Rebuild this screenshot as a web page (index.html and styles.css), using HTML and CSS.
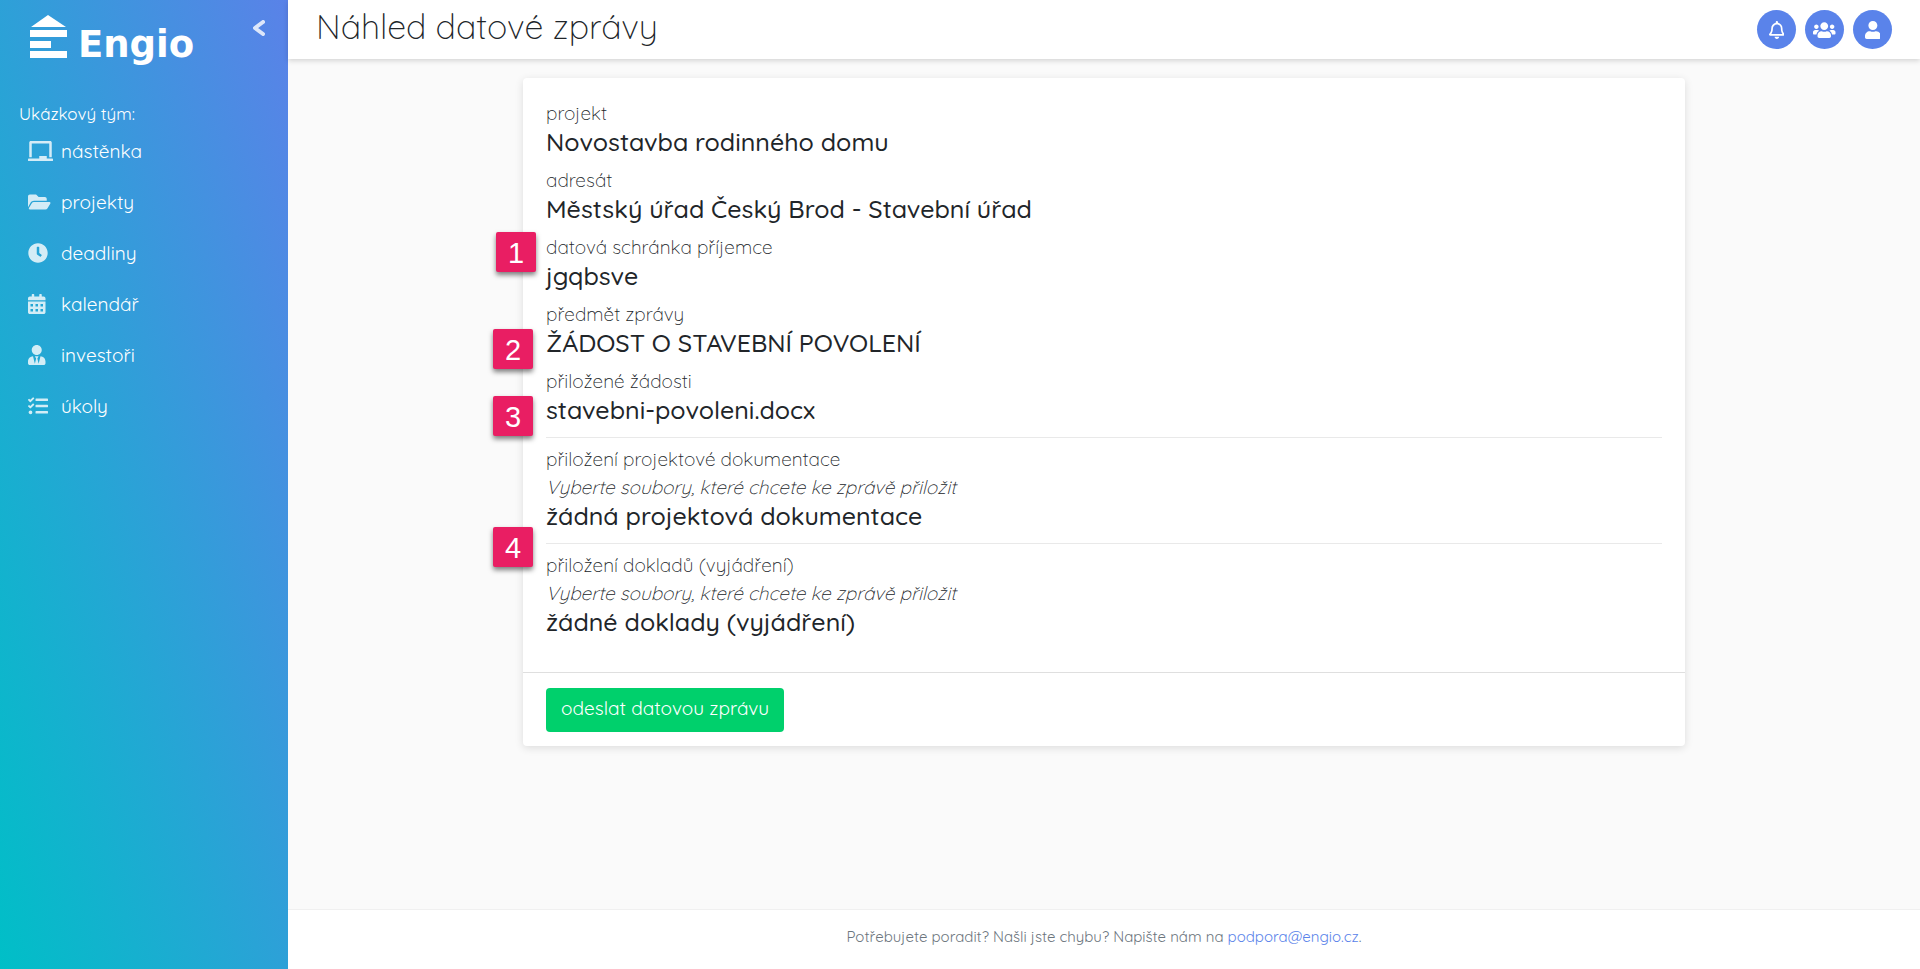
FILE: index.html
```html
<!DOCTYPE html>
<html lang="cs">
<head>
    <meta charset="UTF-8">
    <meta name="viewport" content="width=device-width, initial-scale=1.0">
    <title>Náhled datové zprávy</title>
    <link rel="stylesheet" href="styles.css">
</head>
<body>
    <aside class="sidebar">
        <div class="sidebar-head">
            <a href="#" class="logo">
                <svg class="logo-mark" viewBox="0 0 37 43" aria-hidden="true">
                    <path d="M18 0L36 12H1zM0 15h37v7H0zM0 26h21v7H0zM0 36h37v7H0z"/>
                </svg>
                <span>Engio</span>
            </a>
            <button class="collapse" type="button" aria-label="Skrýt menu">
                <svg viewBox="0 0 14 18" aria-hidden="true"><path d="M11 3L3 9l8 6"/></svg>
            </button>
        </div>
        <p class="team">Ukázkový tým:</p>
        <nav class="menu">
            <a href="#"><svg class="icon" viewBox="0 0 640 512"><path d="M96 64h448v352h64V40c0-22.06-17.94-40-40-40H72C49.94 0 32 17.94 32 40v376h64V64zm528 384H480v-64H288v64H16c-8.84 0-16 7.16-16 16v32c0 8.84 7.16 16 16 16h608c8.84 0 16-7.16 16-16v-32c0-8.84-7.16-16-16-16z"/></svg>nástěnka</a>
            <a href="#"><svg class="icon" viewBox="0 0 576 512"><path d="M572.694 292.093L500.27 416.248A63.997 63.997 0 0 1 444.989 448H45.025c-18.523 0-30.064-20.093-20.731-36.093l72.424-124.155A64 64 0 0 1 152 256h399.964c18.523 0 30.064 20.093 20.73 36.093zM152 224h328v-48c0-26.51-21.49-48-48-48H272l-64-64H48C21.49 64 0 85.49 0 112v278.046l69.077-118.418C86.214 242.25 117.989 224 152 224z"/></svg>projekty</a>
            <a href="#"><svg class="icon" viewBox="0 0 512 512"><path d="M256,8C119,8,8,119,8,256S119,504,256,504,504,393,504,256,393,8,256,8Zm92.49,313h0l-20,25a16,16,0,0,1-22.49,2.5h0l-67-49.72a40,40,0,0,1-15-31.23V112a16,16,0,0,1,16-16h32a16,16,0,0,1,16,16V256l58,42.5A16,16,0,0,1,348.49,321Z"/></svg>deadliny</a>
            <a href="#"><svg class="icon" viewBox="0 0 448 512"><path fill-rule="evenodd" d="M0 192h448v272c0 26.500-21.500 48-48 48H48c-26.500 0-48-21.500-48-48zM64 256h64v64H64zM192 256h64v64h-64zM320 256h64v64h-64zM64 384h64v64H64zM192 384h64v64h-64zM320 384h64v64h-64zM400 64h-48V16c0-8.800-7.200-16-16-16h-32c-8.800 0-16 7.200-16 16v48H160V16c0-8.800-7.200-16-16-16h-32c-8.800 0-16 7.200-16 16v48H48C21.500 64 0 85.500 0 112v48h448v-48c0-26.500-21.500-48-48-48z"/></svg>kalendář</a>
            <a href="#"><svg class="icon" viewBox="0 0 448 512"><path d="M224 256c70.7 0 128-57.3 128-128S294.7 0 224 0 96 57.3 96 128s57.3 128 128 128zm95.8 32.6L272 480l-32-136 32-56h-96l32 56-32 136-47.8-191.4C56.9 292 0 350.3 0 422.4V464c0 26.5 21.5 48 48 48h352c26.5 0 48-21.5 48-48v-41.6c0-72.1-56.9-130.4-128.2-133.8z"/></svg>investoři</a>
            <a href="#"><svg class="icon" viewBox="0 0 512 512"><path d="M139.61 35.5a12 12 0 0 0-17 0L58.93 98.81l-22.7-22.12a12 12 0 0 0-17 0L3.53 92.41a12 12 0 0 0 0 17l47.59 47.4a12.78 12.78 0 0 0 17.61 0l15.59-15.62L156.52 69a12.09 12.09 0 0 0 .09-17zm0 159.19a12 12 0 0 0-17 0l-63.68 63.72-22.7-22.1a12 12 0 0 0-17 0L3.53 252a12 12 0 0 0 0 17L51 316.5a12.77 12.77 0 0 0 17.6 0l15.7-15.69 72.2-72.22a12 12 0 0 0 .09-16.9zM64 368c-26.49 0-48.59 21.5-48.59 48S37.53 464 64 464a48 48 0 0 0 0-96zm432 16H208a16 16 0 0 0-16 16v32a16 16 0 0 0 16 16h288a16 16 0 0 0 16-16v-32a16 16 0 0 0-16-16zm0-320H208a16 16 0 0 0-16 16v32a16 16 0 0 0 16 16h288a16 16 0 0 0 16-16V80a16 16 0 0 0-16-16zm0 160H208a16 16 0 0 0-16 16v32a16 16 0 0 0 16 16h288a16 16 0 0 0 16-16v-32a16 16 0 0 0-16-16z"/></svg>úkoly</a>
        </nav>
    </aside>

    <div class="page">
        <header class="topbar">
            <h1>Náhled datové zprávy</h1>
            <div class="actions">
                <button type="button" aria-label="Upozornění"><svg viewBox="0 0 448 512"><path d="M439.39 362.29c-19.32-20.76-55.47-51.99-55.47-154.29 0-77.7-54.48-139.9-127.94-155.16V32c0-17.67-14.32-32-31.98-32s-31.98 14.33-31.98 32v20.84C118.56 68.1 64.08 130.3 64.08 208c0 102.3-36.15 133.53-55.47 154.29-6 6.45-8.66 14.16-8.61 21.71.11 16.4 12.98 32 32.1 32h383.8c19.12 0 32-15.6 32.1-32 .05-7.55-2.61-15.27-8.61-21.71zM67.53 368c21.22-27.97 44.42-74.33 44.53-159.42 0-.2-.06-.38-.06-.58 0-61.86 50.14-112 112-112s112 50.14 112 112c0 .2-.06.38-.06.58.11 85.1 23.31 131.46 44.53 159.42H67.53zM224 512c35.32 0 63.97-28.65 63.97-64H160.03c0 35.35 28.65 64 63.97 64z"/></svg></button>
                <button type="button" aria-label="Týmy"><svg viewBox="0 0 640 512"><path d="M96 224c35.3 0 64-28.7 64-64s-28.7-64-64-64-64 28.7-64 64 28.7 64 64 64zm448 0c35.3 0 64-28.7 64-64s-28.7-64-64-64-64 28.7-64 64 28.7 64 64 64zm32 32h-64c-17.6 0-33.5 7.1-45.1 18.6 40.3 22.1 68.9 62 75.1 109.4h66c17.7 0 32-14.3 32-32v-32c0-35.3-28.7-64-64-64zm-256 0c61.9 0 112-50.1 112-112S381.9 32 320 32 208 82.1 208 144s50.1 112 112 112zm76.8 32h-8.3c-20.8 10-43.9 16-68.5 16s-47.6-6-68.5-16h-8.3C179.6 288 128 339.6 128 403.2V432c0 26.5 21.5 48 48 48h288c26.5 0 48-21.5 48-48v-28.8c0-63.6-51.6-115.2-115.2-115.2zm-223.7-13.4C161.5 263.1 145.6 256 128 256H64c-35.3 0-64 28.7-64 64v32c0 17.7 14.3 32 32 32h65.9c6.3-47.4 34.9-87.3 75.2-109.4z"/></svg></button>
                <button type="button" aria-label="Uživatel"><svg viewBox="0 0 448 512"><path d="M224 256c70.7 0 128-57.3 128-128S294.7 0 224 0 96 57.3 96 128s57.3 128 128 128zm89.6 32h-16.7c-22.2 10.2-46.9 16-72.9 16s-50.6-5.8-72.9-16h-16.7C60.2 288 0 348.2 0 422.4V464c0 26.5 21.5 48 48 48h352c26.5 0 48-21.5 48-48v-41.6c0-74.2-60.2-134.4-134.4-134.4z"/></svg></button>
            </div>
        </header>

        <main class="content">
            <section class="card">
                <div class="card-body">
                    <div class="field">
                        <div class="label">projekt</div>
                        <div class="value">Novostavba rodinného domu</div>
                    </div>
                    <div class="field">
                        <div class="label">adresát</div>
                        <div class="value">Městský úřad Český Brod - Stavební úřad</div>
                    </div>
                    <div class="field">
                        <span class="marker marker-1">1</span>
                        <div class="label">datová schránka příjemce</div>
                        <div class="value">jgqbsve</div>
                    </div>
                    <div class="field">
                        <span class="marker marker-2">2</span>
                        <div class="label">předmět zprávy</div>
                        <div class="value">ŽÁDOST O STAVEBNÍ POVOLENÍ</div>
                    </div>
                    <div class="field">
                        <span class="marker marker-3">3</span>
                        <div class="label">přiložené žádosti</div>
                        <div class="value">stavebni-povoleni.docx</div>
                    </div>
                    <div class="field divided">
                        <div class="label">přiložení projektové dokumentace</div>
                        <div class="hint">Vyberte soubory, které chcete ke zprávě přiložit</div>
                        <div class="value">žádná projektová dokumentace</div>
                    </div>
                    <div class="field divided">
                        <span class="marker marker-4">4</span>
                        <div class="label">přiložení dokladů (vyjádření)</div>
                        <div class="hint">Vyberte soubory, které chcete ke zprávě přiložit</div>
                        <div class="value">žádné doklady (vyjádření)</div>
                    </div>
                </div>
                <div class="card-footer">
                    <button class="send" type="button">odeslat datovou zprávu</button>
                </div>
            </section>
        </main>

        <footer class="footer">
            Potřebujete poradit? Našli jste chybu? Napište nám na <a href="mailto:podpora@engio.cz">podpora@engio.cz</a>.
        </footer>
    </div>
</body>
</html>
```
FILE: styles.css
```css
* {
    box-sizing: border-box;
}

body, h1, p {
    margin: 0;
}

body {
    display: flex;
    min-height: 100vh;
    font-family: Quicksand, Lato, sans-serif;
    font-size: 19px;
    font-weight: 300;
    line-height: 28px;
    color: #212529;
    background-color: #fafafa;
}

a {
    color: #5a83ea;
    text-decoration: none;
}

button {
    border: none;
    font-family: inherit;
    cursor: pointer;
}

/* Sidebar */
.sidebar {
    flex: 0 0 288px;
    color: #fff;
    background: linear-gradient(to top right, #00bfc7, #5a82e8);
}

.sidebar-head {
    display: flex;
    justify-content: space-between;
    align-items: flex-start;
    padding: 15px 22px 0 30px;
    height: 102px;
}

.logo {
    display: flex;
    gap: 11px;
    color: #fff;
    font-family: "DejaVu Sans", sans-serif;
    font-size: 37px;
    font-weight: 700;
    line-height: 60px;
}

.logo-mark {
    width: 37px;
    height: 43px;
    fill: #fff;
}

.collapse {
    padding: 4px 0;
    background: none;
    opacity: 0.8;
}

.collapse svg {
    display: block;
    width: 14px;
    height: 18px;
    fill: none;
    stroke: #fff;
    stroke-width: 4;
    stroke-linecap: round;
    stroke-linejoin: round;
}

.team {
    padding-left: 19px;
    font-size: 17px;
    font-weight: 400;
    line-height: 23px;
}

.menu a {
    display: grid;
    grid-template-columns: 33px 1fr;
    align-items: center;
    height: 51px;
    padding-left: 28px;
    color: #fff;
    font-size: 19px;
    font-weight: 400;
}

.icon {
    height: 20px;
    fill: #fff;
    opacity: 0.8;
}

/* Top bar */
.page {
    flex: 1;
    display: flex;
    flex-direction: column;
}

.topbar {
    display: flex;
    justify-content: space-between;
    align-items: center;
    height: 59px;
    padding: 0 28px;
    background-color: #fff;
    box-shadow: 0 2px 5px rgba(0, 0, 0, 0.15);
}

.topbar h1 {
    padding-bottom: 5px;
    font-size: 34px;
    font-weight: 300;
    line-height: 50px;
}

.actions {
    display: flex;
    gap: 9px;
}

.actions button {
    display: flex;
    align-items: center;
    justify-content: center;
    width: 39px;
    height: 39px;
    padding: 0;
    border-radius: 50%;
    background-color: #5a83ea;
}

.actions svg {
    height: 18px;
    fill: #fff;
}

/* Card */
.content {
    flex: 1;
    padding: 19px 235px;
}

.card {
    background-color: #fff;
    border-radius: 4px;
    box-shadow: 0 2px 9px rgba(0, 0, 0, 0.12);
}

.card-body {
    padding: 21px 23px 26px;
}

.field {
    position: relative;
    padding-bottom: 9px;
}

.divided {
    margin-top: 3px;
    padding-top: 7px;
    border-top: 1px solid #e9e9e9;
}

.value {
    font-size: 25px;
    font-weight: 500;
    line-height: 30px;
}

.hint {
    font-style: italic;
}

/* Numbered markers beside the fields */
.marker {
    position: absolute;
    left: -53px;
    width: 40px;
    height: 40px;
    border-radius: 2px;
    background-color: #e91e63;
    box-shadow: 0 3px 5px rgba(0, 0, 0, 0.5);
    color: #fff;
    font-family: "Liberation Sans", Arial, sans-serif;
    font-size: 29px;
    font-weight: 400;
    line-height: 42px;
    text-align: center;
}

.marker-1 {
    top: -1px;
    left: -50px;
}

.marker-2,
.marker-3 {
    top: 29px;
}

.marker-4 {
    top: -17px;
}

.card-footer {
    padding: 15px 23px 14px;
    border-top: 1px solid #dfdfdf;
}

.send {
    display: block;
    padding: 7px 15px 10px;
    border-radius: 4px;
    background-color: #00d06c;
    color: #fff;
    font-size: 19px;
    font-weight: 400;
    line-height: 27px;
}

.footer {
    padding: 12px 0 17px;
    border-top: 1px solid #f0f0f0;
    background-color: #fff;
    color: #6c757d;
    font-size: 15px;
    font-weight: 400;
    line-height: 30px;
    text-align: center;
}
```
